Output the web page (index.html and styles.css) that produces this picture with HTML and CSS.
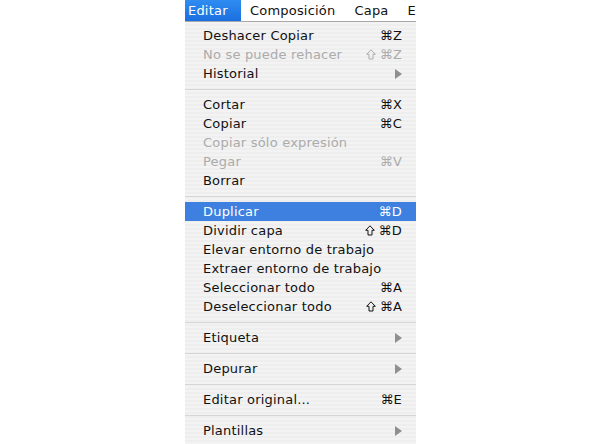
FILE: index.html
```html
<!DOCTYPE html>
<html lang="es">
<head>
<meta charset="utf-8">
<title>Menú Editar</title>
<link rel="stylesheet" href="styles.css">
</head>
<body>
<div class="wrap">
  <div class="menubar">
    <span class="mb-item active">Editar</span>
    <span class="mb-item">Composición</span>
    <span class="mb-item">Capa</span>
    <span class="mb-item last">E</span>
  </div>
  <ul class="menu">
    <li class="item"><span>Deshacer Copiar</span><span class="key">⌘Z</span></li>
    <li class="item disabled"><span>No se puede rehacer</span><span class="key"><svg class="shift" viewBox="0 0 10 11" width="10" height="11"><path d="M5 0.8 L9.3 5.3 L7 5.3 L7 10 L3 10 L3 5.3 L0.7 5.3 Z"/></svg>⌘Z</span></li>
    <li class="item"><span>Historial</span><span class="arrow"></span></li>
    <li class="sep"></li>
    <li class="item"><span>Cortar</span><span class="key">⌘X</span></li>
    <li class="item"><span>Copiar</span><span class="key">⌘C</span></li>
    <li class="item disabled"><span>Copiar sólo expresión</span></li>
    <li class="item disabled"><span>Pegar</span><span class="key">⌘V</span></li>
    <li class="item"><span>Borrar</span></li>
    <li class="sep"></li>
    <li class="item selected"><span>Duplicar</span><span class="key">⌘D</span></li>
    <li class="item"><span>Dividir capa</span><span class="key"><svg class="shift" viewBox="0 0 10 11" width="10" height="11"><path d="M5 0.8 L9.3 5.3 L7 5.3 L7 10 L3 10 L3 5.3 L0.7 5.3 Z"/></svg>⌘D</span></li>
    <li class="item"><span>Elevar entorno de trabajo</span></li>
    <li class="item"><span>Extraer entorno de trabajo</span></li>
    <li class="item"><span>Seleccionar todo</span><span class="key">⌘A</span></li>
    <li class="item"><span>Deseleccionar todo</span><span class="key"><svg class="shift" viewBox="0 0 10 11" width="10" height="11"><path d="M5 0.8 L9.3 5.3 L7 5.3 L7 10 L3 10 L3 5.3 L0.7 5.3 Z"/></svg>⌘A</span></li>
    <li class="sep"></li>
    <li class="item"><span>Etiqueta</span><span class="arrow"></span></li>
    <li class="sep"></li>
    <li class="item"><span>Depurar</span><span class="arrow"></span></li>
    <li class="sep"></li>
    <li class="item"><span>Editar original...</span><span class="key">⌘E</span></li>
    <li class="sep"></li>
    <li class="item"><span>Plantillas</span><span class="arrow"></span></li>
  </ul>
</div>
</body>
</html>
```
FILE: styles.css
```css
html, body {
  margin: 0;
  padding: 0;
  background: #ffffff;
  height: 444px;
  overflow: hidden;
}
body {
  font-family: "DejaVu Sans", "Liberation Sans", sans-serif;
  font-size: 13px;
  letter-spacing: 0.2px;
  color: #111;
}
.wrap {
  margin-left: 185px;
  width: 231px;
  height: 444px;
  display: flex;
  flex-direction: column;
}
.menubar {
  height: 21px;
  display: flex;
  align-items: stretch;
  border-bottom: 1px solid #a8a8a8;
  background: #ffffff;
  white-space: nowrap;
}
.mb-item {
  display: flex;
  align-items: center;
  padding: 0 10px 0 9px;
  line-height: 21px;
}
.mb-item.active {
  box-sizing: border-box;
  width: 56px;
  padding: 0 0 0 3px;
  background: linear-gradient(#2f8cf0, #1a6fe0);
  color: #fff;
}
.mb-item.last { padding-right: 0; }
.menu {
  list-style: none;
  margin: 0;
  padding: 4px 0 0 0;
  flex: 1;
  background-color: #f1f1f1;
  background-image: repeating-linear-gradient(#f3f3f3 0, #f3f3f3 2px, #eeeeee 2px, #eeeeee 4px);
}
.item {
  height: 19px;
  display: flex;
  align-items: center;
  justify-content: space-between;
  padding: 0 14px 0 18px;
  white-space: nowrap;
}
.item.disabled { color: #ababab; }
.item.selected {
  background: #3d80df;
  color: #fff;
}
.key {
  display: flex;
  align-items: center;
}
.shift {
  fill: none;
  stroke: currentColor;
  stroke-width: 1;
  margin-right: 4px;
}
.arrow {
  width: 0;
  height: 0;
  border-top: 5px solid transparent;
  border-bottom: 5px solid transparent;
  border-left: 7px solid #8f8f8f;
}
.sep {
  height: 12px;
  display: flex;
  align-items: center;
}
.sep::before {
  content: "";
  flex: 1;
  height: 1px;
  background: #d6d6d6;
}
```
